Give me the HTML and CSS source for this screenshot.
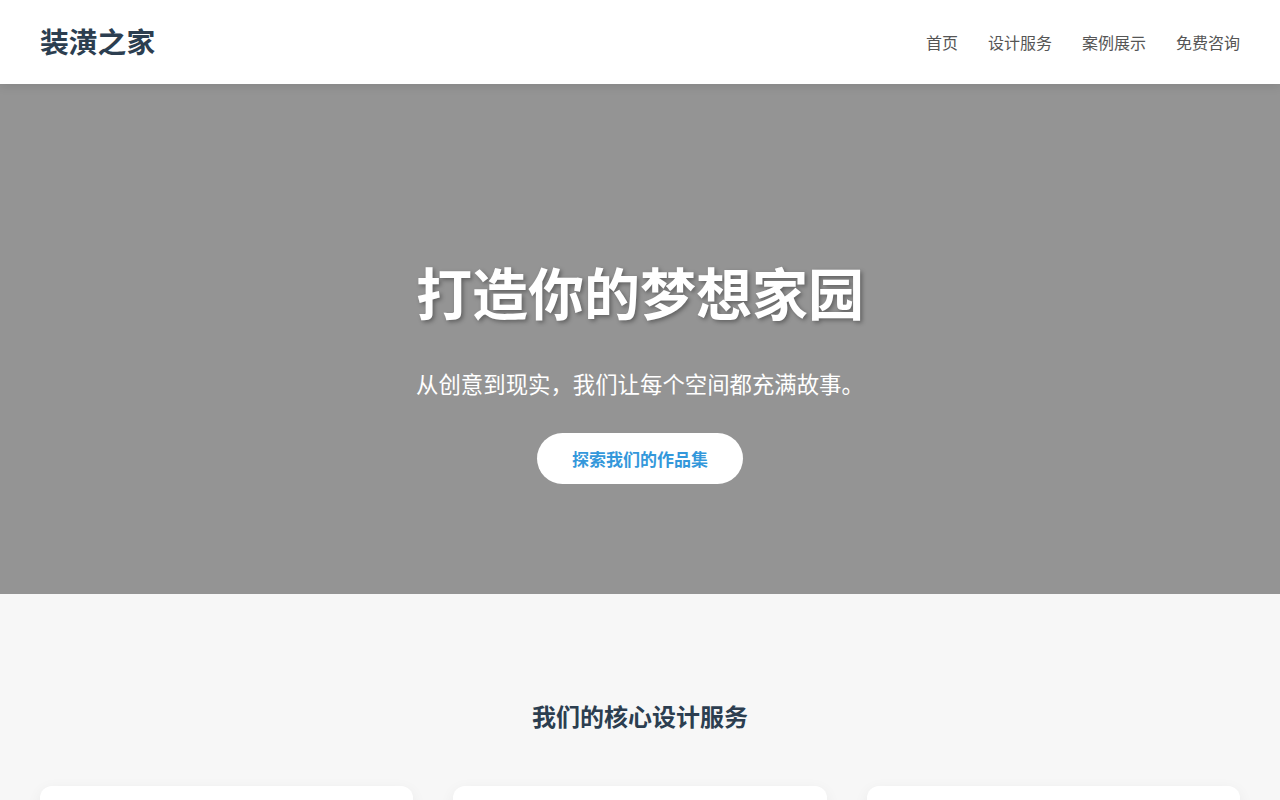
FILE: index.html
```html
<!DOCTYPE html>
<html lang="zh-CN">
<head>
<meta charset="utf-8">
<title>装潢之家</title>
<link rel="stylesheet" href="styles.css">
</head>
<body>
<header class="site-header">
  <div class="logo">装潢之家</div>
  <nav class="nav">
    <a href="#">首页</a>
    <a href="#">设计服务</a>
    <a href="#">案例展示</a>
    <a href="#">免费咨询</a>
  </nav>
</header>
<section class="hero">
  <h1 class="hero-title">打造你的梦想家园</h1>
  <p class="hero-sub">从创意到现实，我们让每个空间都充满故事。</p>
  <a class="hero-btn" href="#">探索我们的作品集</a>
</section>
<section class="services">
  <h2 class="services-title">我们的核心设计服务</h2>
  <div class="cards">
    <div class="card"><div class="card-top"></div><h3>全屋定制设计</h3><p>根据您的生活方式，量身打造专属空间。</p></div>
    <div class="card"><div class="card-top"></div><h3>软装搭配</h3><p>精选家具与饰品，让家更有温度。</p></div>
    <div class="card"><div class="card-top"></div><h3>旧房翻新</h3><p>焕新老房，重现居住的美好。</p></div>
  </div>
</section>
</body>
</html>
```
FILE: styles.css
```css
* { box-sizing: border-box; }
body {
  margin: 0;
  font-family: "Noto Sans CJK SC", "Noto Sans", sans-serif;
  background: #f7f7f7;
  color: #333;
}
.site-header {
  height: 84px;
  padding: 0 40px;
  background: #fff;
  display: flex;
  align-items: center;
  justify-content: space-between;
  box-shadow: 0 2px 10px rgba(0,0,0,0.1);
  position: relative;
  z-index: 2;
}
.logo {
  font-size: 28.8px;
  font-weight: 700;
  color: #2c3e50;
  line-height: 1;
  margin-top: -1px;
}
.nav {
  display: flex;
  gap: 30px;
}
.nav a {
  font-size: 16px;
  color: #555;
  text-decoration: none;
  line-height: 1;
  margin-top: -1px;
}
.hero {
  height: 510px;
  background: #949494;
  display: flex;
  flex-direction: column;
  align-items: center;
  padding-top: 173px;
  text-align: center;
}
.hero-title {
  margin: 0;
  font-size: 56px;
  line-height: 67px;
  font-weight: 700;
  color: #fff;
  text-shadow: 2px 2px 4px rgba(0,0,0,0.35);
}
.hero-sub {
  margin: 41px 0 32px;
  font-size: 22.4px;
  line-height: 36px;
  color: #fff;
}
.hero-btn {
  display: inline-block;
  background: #fff;
  color: #3498db;
  font-size: 17px;
  font-weight: 700;
  line-height: 21px;
  padding: 15px 35px;
  border-radius: 30px;
  text-decoration: none;
}
.services {
  padding: 107px 40px 80px;
}
.services-title {
  margin: 0 0 56px;
  text-align: center;
  font-size: 24px;
  line-height: 29px;
  font-weight: 700;
  color: #2c3e50;
}
.cards {
  display: grid;
  grid-template-columns: repeat(3, 1fr);
  gap: 40px;
}
.card {
  background: #fff;
  border-radius: 12px;
  box-shadow: 0 4px 15px rgba(0,0,0,0.06);
  padding: 30px;
  min-height: 300px;
}
.card-top {
  height: 60px;
  margin-bottom: 20px;
}
.card h3 {
  margin: 0 0 12px;
  color: #2c3e50;
  font-size: 20px;
}
.card p {
  margin: 0;
  color: #666;
  font-size: 15px;
}
```
